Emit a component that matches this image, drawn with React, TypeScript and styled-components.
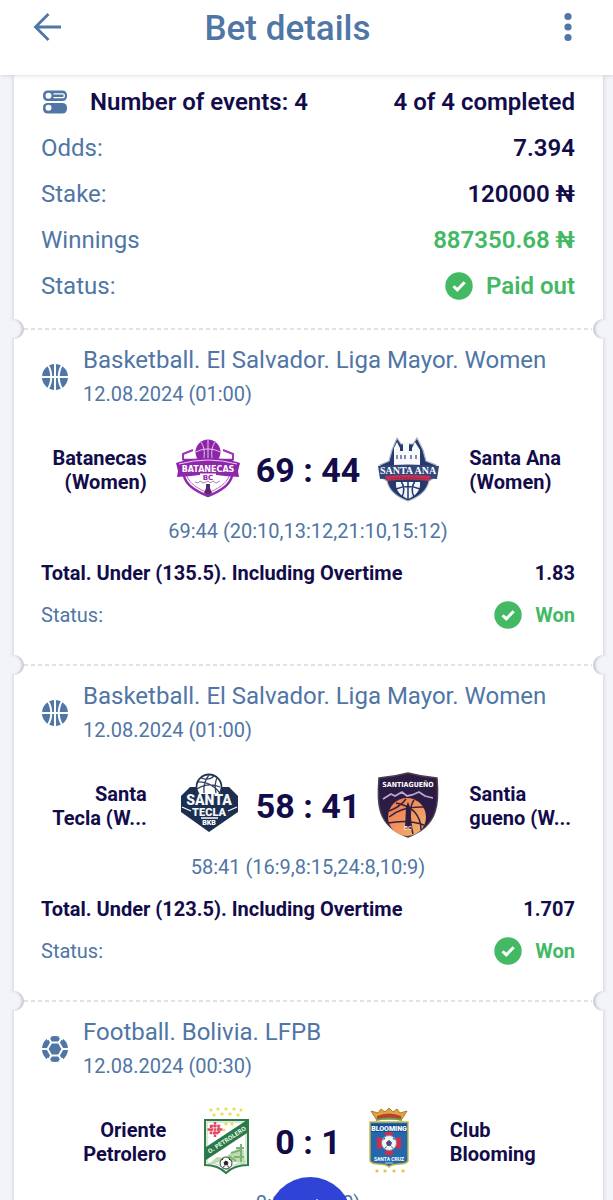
import React from "react";
import styled, { createGlobalStyle } from "styled-components";

const color = {
  page: "#f3f4f9",
  card: "#ffffff",
  blue: "#4f76a5",
  navy: "#130c4b",
  green: "#43b963",
  dash: "#e1e2e9",
  accent: "#2f43d6",
};

const GlobalStyle = createGlobalStyle`
  *, *::before, *::after { box-sizing: border-box; }
  body {
    margin: 0;
    background: ${color.page};
    font-family: Roboto, "Liberation Sans", sans-serif;
    color: ${color.blue};
  }
  h1, h2, p { margin: 0; font-weight: 400; }
`;

const Screen = styled.div`
  display: flex;
  flex-direction: column;
  height: 100vh;
  overflow: hidden;
`;

const Header = styled.header`
  display: flex;
  align-items: flex-start;
  flex: none;
  height: 75px;
  padding: 7px 25px 0 27px;
  background: ${color.card};
  box-shadow: 0 0 4px rgba(60, 64, 90, 0.25);
  z-index: 1;
`;

const Title = styled.h1`
  flex: 1;
  padding-right: 40px;
  font-size: 35px;
  line-height: 44px;
  font-weight: 500;
  text-align: center;
`;

const IconButton = styled.button`
  display: flex;
  align-items: center;
  justify-content: center;
  width: 40px;
  height: 40px;
  padding: 0;
  border: 0;
  background: none;
  color: ${color.blue};
`;

const Scroller = styled.main`
  flex: 1;
  min-height: 0;
  padding: 0 10px 0 14px;
  overflow-y: auto;
  scrollbar-width: none;
`;

const Ticket = styled.div`
  background: ${color.card};
  box-shadow: 0 0 4px rgba(60, 64, 90, 0.25);
`;

const Summary = styled.section`
  padding: 4px 28px 19px 27px;
`;

const Row = styled.div<{ $small?: boolean }>`
  display: flex;
  align-items: center;
  justify-content: space-between;
  height: ${(p) => (p.$small ? 42 : 46)}px;
  font-size: ${(p) => (p.$small ? 20 : 24)}px;
`;

const Strong = styled.span<{ $tone?: "green"; $bold?: boolean }>`
  display: flex;
  align-items: center;
  gap: 13px;
  font-weight: ${(p) => (p.$bold ? 700 : 600)};
  color: ${(p) => (p.$tone === "green" ? color.green : color.navy)};
`;

const EventCount = styled(Strong)`
  gap: 21px;
`;

const Event = styled.section`
  position: relative;
  padding: 15px 28px 28px 27px;

  &::before {
    content: "";
    position: absolute;
    top: 0;
    left: 10px;
    right: 11px;
    height: 2px;
    background: repeating-linear-gradient(90deg, ${color.dash} 0 4px, transparent 4px 7px);
  }
`;

const Notch = styled.span<{ $side: "left" | "right" }>`
  position: absolute;
  top: -9px;
  ${(p) => p.$side}: -10px;
  width: 20px;
  height: 20px;
  border-radius: 50%;
  background: ${color.page};
  box-shadow: inset ${(p) => (p.$side === "left" ? "-3px" : "3px")} 0 3px -1px rgba(60, 64, 90, 0.28);
`;

const League = styled.div`
  display: flex;
  align-items: center;
  gap: 14px;
`;

const LeagueName = styled.h2`
  font-size: 24px;
  line-height: 34px;
`;

const EventDate = styled.p`
  font-size: 20px;
  line-height: 34px;
`;

const Match = styled.div`
  display: flex;
  align-items: center;
  margin-top: 27px;
`;

const Team = styled.span<{ $align: "left" | "right" }>`
  flex: 1 0 0;
  font-size: 20px;
  line-height: 24px;
  font-weight: 700;
  color: ${color.navy};
  text-align: ${(p) => p.$align};
  white-space: pre-line;
`;

const Faceoff = styled.div`
  display: flex;
  align-items: center;
  gap: 16px;
  margin: 0 29px;
`;

const Score = styled.strong`
  font-size: 34px;
  line-height: 40px;
  font-weight: 700;
  color: ${color.navy};
`;

const Periods = styled.p`
  margin: 17px 0 9px;
  font-size: 20px;
  line-height: 24px;
  text-align: center;
`;

const Fab = styled.button`
  position: fixed;
  bottom: -61px;
  left: 50%;
  display: flex;
  justify-content: center;
  width: 84px;
  height: 84px;
  margin-left: -39px;
  padding: 22px 0 0;
  border: 0;
  border-radius: 50%;
  background: ${color.accent};
`;

const Logo = styled.svg`
  display: block;
  width: 64px;
  height: 64px;
  overflow: visible;
`;

const Check = () => (
  <svg width="28" height="28" viewBox="0 0 28 28" aria-hidden="true">
    <circle cx="14" cy="14" r="13.7" fill={color.green} />
    <path d="M8.5 14.2l3.8 3.7 7.4-7.6" fill="none" stroke="#fff" strokeWidth="3" />
  </svg>
);

const EventsIcon = () => (
  <svg width="28" height="28" viewBox="0 0 28 28" aria-hidden="true">
    <rect x="2" y="2.5" width="24" height="10.500" rx="4.500" fill={color.blue} />
    <circle cx="7.500" cy="7.700" r="3" fill="#fff" />
    <path d="M12.500 5.800h9q1.800 0 1.800 1.900t-1.800 1.900h-9" fill="none" stroke="#fff" strokeWidth="1.300" />
    <rect x="2" y="15" width="24" height="10.500" rx="4.500" fill={color.blue} />
    <circle cx="7.500" cy="19.800" r="3" fill="#fff" />
  </svg>
);

const BasketballIcon = () => (
  <svg width="28" height="28" viewBox="0 0 28 28" aria-hidden="true">
    <circle cx="14" cy="14" r="13" fill={color.blue} />
    <path
      d="M14 0v28M0 14h28M6.500 1.500c5 7 5 18 0 25M21.500 1.500c-5 7-5 18 0 25"
      fill="none"
      stroke="#fff"
      strokeWidth="2"
    />
  </svg>
);

const FootballIcon = () => (
  <svg width="28" height="28" viewBox="0 0 28 28" aria-hidden="true">
    <circle cx="14" cy="14" r="13" fill={color.blue} />
    <g fill="none" stroke="#fff" strokeWidth="2">
      <path d="M10.200 7.600h7.600l3.700 6.400-3.700 6.400h-7.600L6.500 14z" />
      <path d="M10.200 7.600L7 2M17.800 7.600L21 2M21.500 14H28M17.800 20.400L21 26M10.200 20.400L7 26M6.500 14H0" />
    </g>
    <path d="M6 0l4.500 2.500L6 5.500zM22 0l-4.500 2.500L22 5.500zM6 28l4.500-2.500L6 22.500zM22 28l-4.500-2.500L22 22.500z" fill="#fff" />
  </svg>
);

const BatanecasLogo = () => (
  <Logo viewBox="0 0 64 64" role="img" aria-label="Batanecas">
    <circle cx="32" cy="14" r="12.500" fill="#8c25a8" />
    <path
      d="M32 2v24M20 14c7-4 17-4 24 0M25 4c4 6 4 13 2 20M39 4c-4 6-4 13-2 20"
      fill="none"
      stroke="#e6c4ee"
      strokeWidth="1"
    />
    <path d="M7 22v-6l10-4M57 22v-6l-10-4" fill="none" stroke="#9a35b5" strokeWidth="2" />
    <path d="M8 22v16c2 9 11 15 24 20 13-5 22-11 24-20V22z" fill="#fff" stroke="#9229ad" strokeWidth="2.500" />
    <path d="M11 38c3 8 10 12 21 17 11-5 18-9 21-17" fill="none" stroke="#b46ac7" strokeWidth="1" />
    <path d="M3 24q29-8 58 0l3 1-2 8 1 6-14-1q-17-3-34 0L1 39l1-6-2-8z" fill="#8f27ab" />
    <path d="M3 26q29-8 58 0" fill="none" stroke="#e9cff0" strokeWidth="1" />
    <text x="32" y="34" textAnchor="middle" fontFamily="DejaVu Sans" fontWeight="700" fontSize="8" fill="#fff">
      BATANECAS
    </text>
    <rect x="24" y="35.500" width="16" height="7" fill="#fff" />
    <text x="32" y="42" textAnchor="middle" fontFamily="DejaVu Sans" fontWeight="700" fontSize="7" fill="#8f27ab">
      BC
    </text>
    <path d="M19 44l3 1 2-2 3 2 3-1 2-1 2 2 3-2 3 2 4-2" fill="none" stroke="#8a6a96" strokeWidth=".8" />
    <path d="M30 46h4v4l2 5-4 2-4-2 2-5z" fill="#5c2575" />
  </Logo>
);

const SantaAnaLogo = () => (
  <Logo viewBox="0 0 64 64" role="img" aria-label="Santa Ana">
    <path
      d="M4 27l9-4 3-11 5-12 4 6h12l4-6 6 12 3 11 10 4-2 13-5 3c-2 10-10 16-21 20C21 59 13 53 11 43l-5-3z"
      fill="#25396c"
      stroke="#aeb6c9"
      strokeWidth="1.200"
    />
    <path d="M18 28V10l3-6 3 6v3h3V6l3-3 3 3v7h3v-3l3-6 5 8v16z" fill="#f8f9fc" />
    <path d="M21 17v4M25 17v4M29 17v4M35 17v4M40 17v4" stroke="#405280" strokeWidth="1.300" />
    <path d="M2 28q30-3 61 0l-2 13q-28-3-57 0z" fill="#31477c" />
    <text x="32" y="36" textAnchor="middle" fontFamily="Liberation Serif" fontWeight="700" fontSize="10" fill="#fff">
      SANTA ANA
    </text>
    <path d="M9 38q23-2 46 0l-2 5q-21-3-42 0z" fill="#c92d4d" />
    <path d="M15 41q17-2 34 0" stroke="#71304f" fill="none" strokeDasharray="2 1" />
    <path d="M20 44h24c1 9-5 14-12 17-7-3-13-8-12-17z" fill="#f3f5f9" />
    <path d="M32 43v18M20 51q12-5 24 0M25 43q5 8 1 16M39 43q-5 8-1 16" fill="none" stroke="#25396c" strokeWidth="1.500" />
  </Logo>
);

const SantaTeclaLogo = () => (
  <Logo viewBox="0 0 64 64" role="img" aria-label="Santa Tecla">
    <path d="M14 13L5 22v16l28 20 29-20V22l-9-9z" fill="#1d2f50" />
    <circle cx="33" cy="13" r="12.500" fill="#fff" stroke="#26354f" strokeWidth="1.800" />
    <path
      d="M22 8q12-1 22 11M33 1q-6 7-5 18M25 4q8 3 13-2M21 15q11-7 23-2M41 4q-3 6-1 15"
      fill="none"
      stroke="#35445e"
      strokeWidth="1.300"
    />
    <path d="M8 20h51v14H8z" fill="#1d2f50" />
    <text x="33" y="31" textAnchor="middle" fontFamily="Roboto" fontWeight="900" fontSize="14" fill="#f5f7fa">
      SANTA
    </text>
    <text x="33" y="42" textAnchor="middle" fontFamily="Roboto" fontWeight="900" fontSize="11" fill="#f5f7fa">
      TECLA
    </text>
    <path d="M6 33l9 4M61 33l-9 4M25 44h17" stroke="#fff" strokeWidth="1.300" />
    <text x="33" y="51" textAnchor="middle" fontFamily="Roboto" fontWeight="900" fontSize="7" fill="#fff">
      BKB
    </text>
  </Logo>
);

const SantiaguenoLogo = () => (
  <Logo viewBox="0 0 64 64" role="img" aria-label="Santiagueno">
    <defs>
      <linearGradient id="sunset" x1="0" y1="0" x2="1" y2="1">
        <stop offset="0" stopColor="#ed764f" />
        <stop offset="1" stopColor="#f3b46d" />
      </linearGradient>
    </defs>
    <path
      d="M3 4Q17 3 32-1q15 4 29 5c2 24 2 48-29 59C0 52 1 28 3 4z"
      fill="#2c1c43"
      stroke="#4a3e50"
      strokeWidth="1.500"
    />
    <circle cx="31" cy="43" r="19" fill="url(#sunset)" />
    <path
      d="M13 43q13-11 35-10M20 29q25 5 25 27M12 49q21-4 36 2M38 26q-7 10-1 34M30 25q-6 8-17 12"
      fill="none"
      stroke="#3a213e"
      strokeWidth="1.500"
    />
    <path d="M30 33l2-5 2 5 1 22h-6z" fill="#2c1c43" />
    <text x="32" y="56" textAnchor="middle" fontFamily="Roboto" fontWeight="700" fontSize="6" fill="#ffe7d2">
      BC
    </text>
    <path d="M7 25l8-5 4 2 7-4 5 4 5-1 7-3 6 4 8 2" fill="none" stroke="#baa8d2" strokeWidth="1.800" />
    <text
      x="32"
      y="13"
      textAnchor="middle"
      fontFamily="Liberation Sans Narrow, DejaVu Sans Condensed"
      fontWeight="700"
      fontSize="7"
      fill="#fff"
    >
      SANTIAGUEÑO
    </text>
  </Logo>
);

const star = "M0-2.200l.6 1.500 1.600.1-1.200 1 .4 1.600L0 1.100-1.400 2l.4-1.600-1.200-1 1.600-.1z";

const OrienteLogo = () => (
  <Logo viewBox="0 0 64 64" role="img" aria-label="Oriente Petrolero">
    <path d="M10 10h43v45q-14 0-22 8-8-8-21-8z" fill="#fff" stroke="#307b4e" strokeWidth="2" />
    <path d="M12 12h39v41q-13 0-20 7-6-7-19-7z" fill="none" stroke="#b5d4ab" strokeWidth="1" />
    <g fill="#e7dc43">
      {[
        [16, 0], [23, -1], [31, -1], [39, -1], [46, 0],
        [19, 5], [27, 4], [35, 4], [43, 5],
        [31, 14], [37, 14], [29, 20],
      ].map(([x, y]) => (
        <path key={`${x}-${y}`} d={star} transform={`translate(${x} ${y})`} />
      ))}
    </g>
    <path d="M11 37l41-27v13L11 50z" fill="#28794b" />
    <text
      x="32"
      y="32"
      transform="rotate(-33 32 30)"
      textAnchor="middle"
      fontFamily="Liberation Sans Narrow, DejaVu Sans Condensed"
      fontWeight="700"
      fontSize="6"
      fill="#e4f2dd"
    >
      O. PETROLERO
    </text>
    <g fill="none" stroke="#e34862" strokeWidth="2.500">
      <path d="M20 12v15M12.500 19.500h15M16 16h8v7h-8z" strokeDasharray="2.500 .6" />
    </g>
    <path d="M14 54l8-7 8 1 6-5 8-5 5 2 1 13-12-1-5 4-7-4z" fill="#bfdcae" />
    <path d="M46 34v18M41 38h8M36 43l10-3M39 47h10M34 46l7 5" stroke="#7fb277" strokeWidth="2" />
    <circle cx="31" cy="53" r="6" fill="#fff" stroke="#294d39" strokeWidth="1" />
    <path d="M31 51l2 1.500-.8 2.300h-2.400l-.8-2.300zM26.500 50.500l2-2M35.500 50.500l-2-2M28.500 57.500l.8-2M33.500 57.500l-.8-2" fill="#222" stroke="#222" />
  </Logo>
);

const BloomingLogo = () => (
  <Logo viewBox="0 0 64 64" role="img" aria-label="Club Blooming">
    <path
      d="M19 9l-5-8 7 2 3-4 4 3 4-4 4 4 4-3 3 4 7-2-5 8z"
      fill="#dba63c"
      stroke="#b9792d"
      strokeWidth="1"
    />
    <path d="M20 6q12-5 24 0v3H20z" fill="#ba3f32" />
    <path d="M19 10q13-3 26 0" fill="none" stroke="#6da04a" strokeWidth="2" />
    <path d="M13 12h38v39q-2 3-8 3-8 0-11 3-3-3-11-3-6 0-8-3z" fill="#2368ad" stroke="#c5b83e" strokeWidth="1.400" />
    <path d="M14 14h36v8H14z" fill="#174f99" />
    <text x="32" y="21" textAnchor="middle" fontFamily="Roboto" fontWeight="900" fontSize="7" fill="#fff">
      BLOOMING
    </text>
    <path d="M28 22h8l-1 7 9-2v12l-9-2 1 8h-8l1-8-9 2V27l9 2z" fill="#d92c43" />
    <circle cx="32" cy="33" r="7.500" fill="#f3f4f8" stroke="#6d91bd" strokeWidth="1" />
    <path d="M32 30.500l2.500 2-1 3h-3l-1-3zM26.500 30l1.500-2M37.500 30l-1.500-2M28 38.500l1.500-2M36 38.500l-1.500-2" fill="#42506d" stroke="#42506d" />
    <text x="32" y="51" textAnchor="middle" fontFamily="Roboto" fontWeight="700" fontSize="5" fill="#fff">
      SANTA CRUZ
    </text>
    <path d="M28 53h8" stroke="#c3d2e6" />
    <g fill="#e9bc35">
      {[20, 28, 37, 46].map((x) => (
        <path key={x} d={star} transform={`translate(${x} 61)`} />
      ))}
    </g>
  </Logo>
);

type EventData = {
  sport: React.ReactNode;
  league: string;
  date: string;
  home: string;
  away: string;
  homeLogo: React.ReactNode;
  awayLogo: React.ReactNode;
  score: string;
  periods: string;
  bet?: { market: string; odds: string; status: string };
};

const events: EventData[] = [
  {
    sport: <BasketballIcon />,
    league: "Basketball. El Salvador. Liga Mayor. Women",
    date: "12.08.2024 (01:00)",
    home: "Batanecas\n(Women)",
    away: "Santa Ana\n(Women)",
    homeLogo: <BatanecasLogo />,
    awayLogo: <SantaAnaLogo />,
    score: "69 : 44",
    periods: "69:44 (20:10,13:12,21:10,15:12)",
    bet: { market: "Total. Under (135.5). Including Overtime", odds: "1.83", status: "Won" },
  },
  {
    sport: <BasketballIcon />,
    league: "Basketball. El Salvador. Liga Mayor. Women",
    date: "12.08.2024 (01:00)",
    home: "Santa\nTecla (W...",
    away: "Santia\ngueno (W...",
    homeLogo: <SantaTeclaLogo />,
    awayLogo: <SantiaguenoLogo />,
    score: "58 : 41",
    periods: "58:41 (16:9,8:15,24:8,10:9)",
    bet: { market: "Total. Under (123.5). Including Overtime", odds: "1.707", status: "Won" },
  },
  {
    sport: <FootballIcon />,
    league: "Football. Bolivia. LFPB",
    date: "12.08.2024 (00:30)",
    home: "Oriente\nPetrolero",
    away: "Club\nBlooming",
    homeLogo: <OrienteLogo />,
    awayLogo: <BloomingLogo />,
    score: "0 : 1",
    periods: "0:1 (0:1,0:0)",
  },
];

const EventCard = ({ event }: { event: EventData }) => (
  <Event>
    <Notch $side="left" />
    <Notch $side="right" />
    <League>
      {event.sport}
      <div>
        <LeagueName>{event.league}</LeagueName>
        <EventDate>{event.date}</EventDate>
      </div>
    </League>
    <Match>
      <Team $align="right">{event.home}</Team>
      <Faceoff>
        {event.homeLogo}
        <Score>{event.score}</Score>
        {event.awayLogo}
      </Faceoff>
      <Team $align="left">{event.away}</Team>
    </Match>
    <Periods>{event.periods}</Periods>
    {event.bet && (
      <>
        <Row $small>
          <Strong $bold>{event.bet.market}</Strong>
          <Strong $bold>{event.bet.odds}</Strong>
        </Row>
        <Row $small>
          <span>Status:</span>
          <Strong $bold $tone="green">
            <Check />
            {event.bet.status}
          </Strong>
        </Row>
      </>
    )}
  </Event>
);

export default function App() {
  return (
    <Screen>
      <GlobalStyle />
      <Header>
        <IconButton type="button" aria-label="Back">
          <svg width="30" height="30" viewBox="0 0 30 30" fill="none" stroke="currentColor" strokeWidth="2.800">
            <path d="M29 15H3M16.500 2L3.500 15l13 13" />
          </svg>
        </IconButton>
        <Title>Bet details</Title>
        <IconButton type="button" aria-label="More options">
          <svg width="8" height="30" viewBox="0 0 8 30" fill="currentColor">
            <circle cx="4" cy="4.500" r="3.600" />
            <circle cx="4" cy="15" r="3.600" />
            <circle cx="4" cy="25.500" r="3.600" />
          </svg>
        </IconButton>
      </Header>
      <Scroller>
        <Ticket>
          <Summary>
            <Row>
              <EventCount>
                <EventsIcon />
                Number of events: 4
              </EventCount>
              <Strong>4 of 4 completed</Strong>
            </Row>
            <Row>
              <span>Odds:</span>
              <Strong>7.394</Strong>
            </Row>
            <Row>
              <span>Stake:</span>
              <Strong>120000 ₦</Strong>
            </Row>
            <Row>
              <span>Winnings</span>
              <Strong $tone="green">887350.68 ₦</Strong>
            </Row>
            <Row>
              <span>Status:</span>
              <Strong $tone="green">
                <Check />
                Paid out
              </Strong>
            </Row>
          </Summary>
          {events.map((event) => (
            <EventCard key={event.league + event.home} event={event} />
          ))}
        </Ticket>
      </Scroller>
      <Fab type="button" aria-label="Open bet slip">
        <svg width="36" height="36" viewBox="0 0 36 36" fill="none" stroke="#fff" strokeWidth="3">
          <path d="M25 2l8 8-22 22-8-8z" />
        </svg>
      </Fab>
    </Screen>
  );
}
